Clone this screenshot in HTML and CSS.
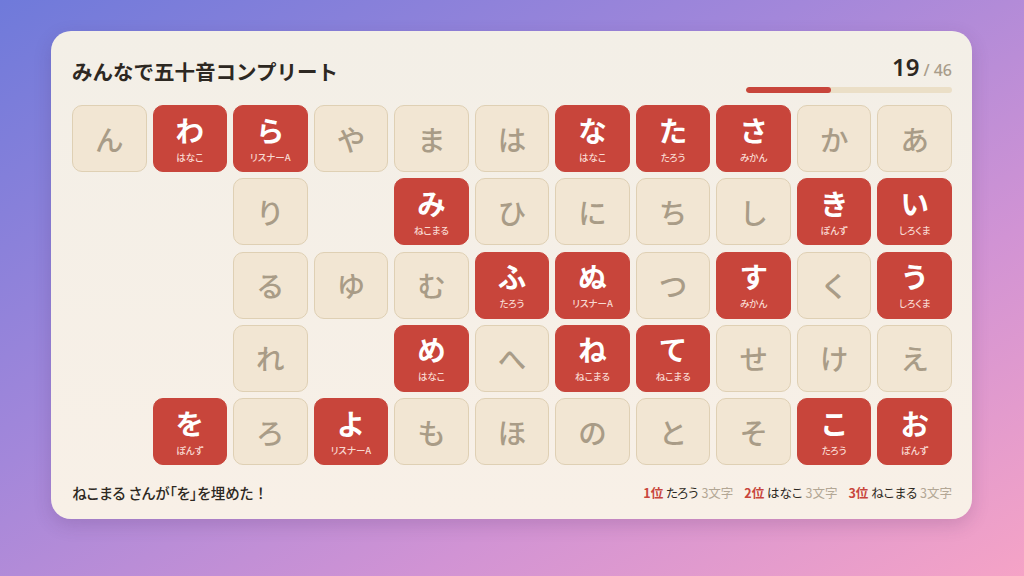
FILE: index.html
```html
<!DOCTYPE html>
<html lang="ja">
<head>
<meta charset="utf-8">
<title>みんなで五十音コンプリート</title>
<link rel="stylesheet" href="styles.css">
</head>
<body>
<main class="card">
  <header class="head">
    <h1 class="title">みんなで五十音コンプリート</h1>
    <div class="progress">
      <div class="count"><span class="num">19</span><span class="total">/ 46</span></div>
      <div class="bar"><div class="fill" style="width:41.3%"></div></div>
    </div>
  </header>
  <section class="grid">
    <div class="cell"><span class="ch">ん</span></div>
    <div class="cell on"><span class="ch">わ</span><span class="who">はなこ</span></div>
    <div class="cell on"><span class="ch">ら</span><span class="who">リスナーA</span></div>
    <div class="cell"><span class="ch">や</span></div>
    <div class="cell"><span class="ch">ま</span></div>
    <div class="cell"><span class="ch">は</span></div>
    <div class="cell on"><span class="ch">な</span><span class="who">はなこ</span></div>
    <div class="cell on"><span class="ch">た</span><span class="who">たろう</span></div>
    <div class="cell on"><span class="ch">さ</span><span class="who">みかん</span></div>
    <div class="cell"><span class="ch">か</span></div>
    <div class="cell"><span class="ch">あ</span></div>

    <div class="gap"></div>
    <div class="gap"></div>
    <div class="cell"><span class="ch">り</span></div>
    <div class="gap"></div>
    <div class="cell on"><span class="ch">み</span><span class="who">ねこまる</span></div>
    <div class="cell"><span class="ch">ひ</span></div>
    <div class="cell"><span class="ch">に</span></div>
    <div class="cell"><span class="ch">ち</span></div>
    <div class="cell"><span class="ch">し</span></div>
    <div class="cell on"><span class="ch">き</span><span class="who">ぽんず</span></div>
    <div class="cell on"><span class="ch">い</span><span class="who">しろくま</span></div>

    <div class="gap"></div>
    <div class="gap"></div>
    <div class="cell"><span class="ch">る</span></div>
    <div class="cell"><span class="ch">ゆ</span></div>
    <div class="cell"><span class="ch">む</span></div>
    <div class="cell on"><span class="ch">ふ</span><span class="who">たろう</span></div>
    <div class="cell on"><span class="ch">ぬ</span><span class="who">リスナーA</span></div>
    <div class="cell"><span class="ch">つ</span></div>
    <div class="cell on"><span class="ch">す</span><span class="who">みかん</span></div>
    <div class="cell"><span class="ch">く</span></div>
    <div class="cell on"><span class="ch">う</span><span class="who">しろくま</span></div>

    <div class="gap"></div>
    <div class="gap"></div>
    <div class="cell"><span class="ch">れ</span></div>
    <div class="gap"></div>
    <div class="cell on"><span class="ch">め</span><span class="who">はなこ</span></div>
    <div class="cell"><span class="ch">へ</span></div>
    <div class="cell on"><span class="ch">ね</span><span class="who">ねこまる</span></div>
    <div class="cell on"><span class="ch">て</span><span class="who">ねこまる</span></div>
    <div class="cell"><span class="ch">せ</span></div>
    <div class="cell"><span class="ch">け</span></div>
    <div class="cell"><span class="ch">え</span></div>

    <div class="gap"></div>
    <div class="cell on"><span class="ch">を</span><span class="who">ぽんず</span></div>
    <div class="cell"><span class="ch">ろ</span></div>
    <div class="cell on"><span class="ch">よ</span><span class="who">リスナーA</span></div>
    <div class="cell"><span class="ch">も</span></div>
    <div class="cell"><span class="ch">ほ</span></div>
    <div class="cell"><span class="ch">の</span></div>
    <div class="cell"><span class="ch">と</span></div>
    <div class="cell"><span class="ch">そ</span></div>
    <div class="cell on"><span class="ch">こ</span><span class="who">たろう</span></div>
    <div class="cell on"><span class="ch">お</span><span class="who">ぽんず</span></div>
  </section>
  <footer class="foot">
    <p class="news">ねこまる さんが「を」を埋めた<span class="bang">！</span></p>
    <ol class="rank">
      <li><span class="pos">1位</span> <span class="name">たろう</span> <span class="score">3文字</span></li>
      <li><span class="pos">2位</span> <span class="name">はなこ</span> <span class="score">3文字</span></li>
      <li><span class="pos">3位</span> <span class="name">ねこまる</span> <span class="score">3文字</span></li>
    </ol>
  </footer>
</main>
</body>
</html>
```

FILE: styles.css
```css
* { box-sizing: border-box; }
html, body { margin: 0; padding: 0; }
body {
  width: 1024px;
  height: 576px;
  overflow: hidden;
  font-family: "Noto Sans CJK JP", "Noto Sans", sans-serif;
  background: linear-gradient(150deg, #6f7ada 0%, #a387da 40%, #d193d4 70%, #f5a3c6 100%);
  padding-top: 31px;
}
.card {
  width: 921px;
  height: 488px;
  margin: 0 0 0 51px;
  background: linear-gradient(180deg, #f3efe7 0%, #f8f0e7 100%);
  border-radius: 20px;
  box-shadow: 0 6px 18px rgba(70, 40, 90, 0.18);
  padding: 21px 20px 0 21px;
  display: flex;
  flex-direction: column;
}
.head {
  display: flex;
  justify-content: space-between;
  align-items: flex-start;
  height: 53px;
}
.title {
  margin: 5px 0 0 0;
  font-size: 20.5px;
  font-weight: 700;
  color: #2d2822;
  line-height: 28px;
  letter-spacing: 0;
}
.progress {
  width: 206px;
  display: flex;
  flex-direction: column;
  align-items: flex-end;
}
.count {
  height: 30px;
  line-height: 30px;
  display: flex;
  align-items: baseline;
  gap: 4px;
}
.num {
  font-family: "Noto Sans", sans-serif;
  font-size: 24px;
  font-weight: 600;
  color: #2d2822;
}
.total {
  font-family: "Noto Sans", sans-serif;
  font-size: 16px;
  font-weight: 500;
  color: #a99d8b;
}
.bar {
  width: 100%;
  height: 6px;
  margin-top: 5px;
  border-radius: 3px;
  background: #ebdfc7;
  overflow: hidden;
}
.fill {
  height: 100%;
  background: #c8453b;
  border-radius: 3px;
}
.grid {
  display: grid;
  grid-template-columns: repeat(11, 1fr);
  grid-auto-rows: 67px;
  column-gap: 6px;
  row-gap: 6.3px;
}
.cell {
  border-radius: 10px;
  background: #f2e6d3;
  border: 1.5px solid #dfd0b4;
  display: flex;
  flex-direction: column;
  align-items: center;
  justify-content: center;
}
.ch {
  font-size: 28.5px;
  line-height: 30px;
  font-weight: 500;
  color: #a99c87;
}
.cell.on {
  background: #c8453b;
  border-color: #c8453b;
}
.cell.on .ch {
  color: #ffffff;
  font-weight: 700;
}
.who {
  font-size: 9.5px;
  line-height: 12px;
  margin-top: 6px;
  color: #f8d8d0;
  font-weight: 500;
  font-feature-settings: "palt";
}
.foot {
  margin-top: 17px;
  display: flex;
  justify-content: space-between;
  align-items: center;
  height: 20px;
}
.news {
  margin: 0;
  font-size: 14.5px;
  font-weight: 500;
  color: #2d2822;
  font-feature-settings: "palt";
}
.bang {
  font-feature-settings: normal;
}
.rank {
  list-style: none;
  margin: 0;
  padding: 0;
  display: flex;
  gap: 11px;
  font-size: 12.5px;
  font-feature-settings: "palt";
}
.pos {
  color: #c8453b;
  font-weight: 700;
}
.name {
  color: #2d2822;
}
.score {
  color: #b3a795;
}
```
